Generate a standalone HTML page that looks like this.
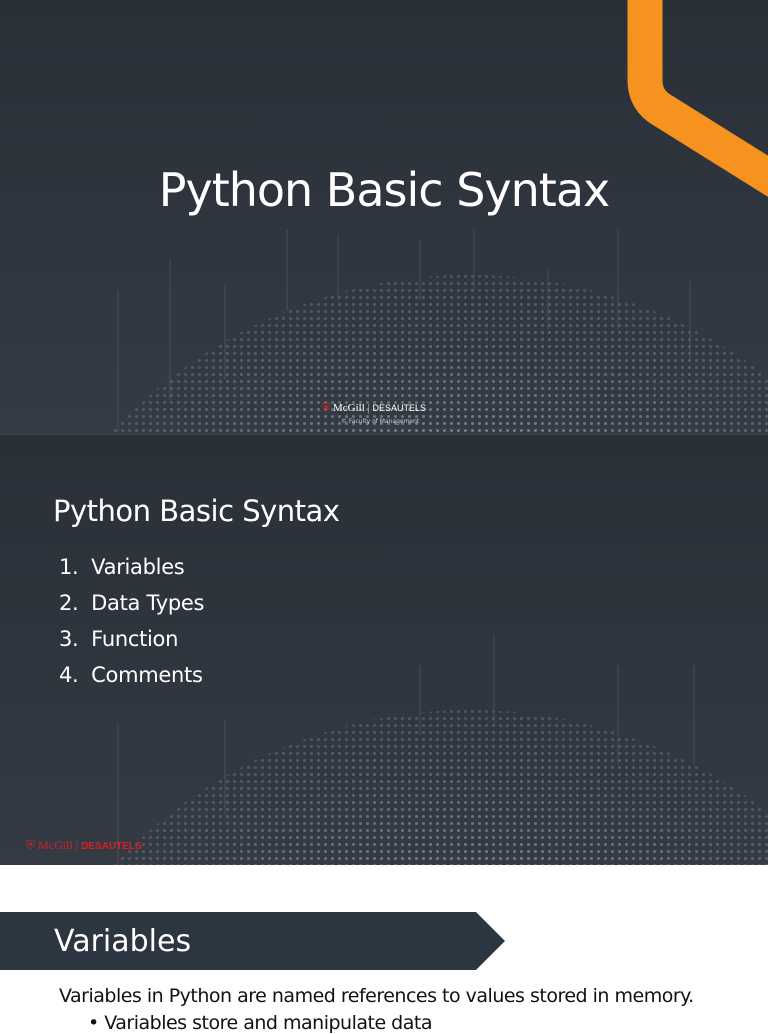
<!DOCTYPE html>
<html><head><meta charset="utf-8"><style>
*{margin:0;padding:0}
body{width:768px;height:1024px;background:#fff;position:relative;overflow:hidden;font-family:"Liberation Sans",sans-serif}
.slide{position:absolute;left:0;width:768px;background:#2c333c;overflow:hidden}
.t{position:absolute;color:#fff;font-family:"DejaVu Sans","Liberation Sans",sans-serif}
</style></head><body>
<div style="position:absolute;left:0;top:430px;width:768px;height:6px;background:#3a4049"></div>
<div class="slide" style="top:0;height:432px;background:linear-gradient(180deg,#2a3038 0%,#2f363f 60%,#343b44 100%)">
<svg width="768" height="432" style="position:absolute;left:0;top:0">
<defs>
<pattern id="d" width="7" height="7" patternUnits="userSpaceOnUse"><circle cx="3.5" cy="3.5" r="1.5" fill="#9aa0a8"/></pattern>
<radialGradient id="g" cx="0.5" cy="0.5" r="0.5"><stop offset="0.6" stop-color="#fff" stop-opacity="0.75"/><stop offset="1" stop-color="#fff" stop-opacity="0.3"/></radialGradient>
<mask id="m"><ellipse cx="470" cy="770" rx="490" ry="495" fill="url(#g)"/></mask>
</defs>
<rect width="768" height="432" fill="url(#d)" mask="url(#m)"/>
<g stroke="#5a626b" stroke-width="1" opacity="0.6">
<line x1="118" y1="290" x2="118" y2="432"/><line x1="170" y1="260" x2="170" y2="400"/><line x1="225" y1="285" x2="225" y2="380"/><line x1="287" y1="230" x2="287" y2="310"/><line x1="338" y1="235" x2="338" y2="300"/><line x1="420" y1="240" x2="420" y2="300"/><line x1="474" y1="230" x2="474" y2="290"/><line x1="548" y1="270" x2="548" y2="330"/><line x1="618" y1="230" x2="618" y2="330"/><line x1="690" y1="280" x2="690" y2="360"/>
</g>
<path d="M645 0 L645 80 Q645 100 662 110 L790 190" fill="none" stroke="#f6921e" stroke-width="35"/>
</svg>
<div class="t" style="left:0;width:768px;top:163px;text-align:center;font-size:46px;letter-spacing:-1px">Python Basic Syntax</div>
<div class="t" style="left:322px;top:402px;font-size:11px;font-family:'Liberation Serif',serif"><span style="color:#d22">&#9960;</span> McGill <span style="opacity:.6">|</span> <span style="font-family:'Liberation Sans';font-size:9px">DESAUTELS</span></div>
<div class="t" style="left:341px;top:418px;font-size:6px;color:#ccc">© Faculty of Management</div>
</div>
<div class="slide" style="top:435px;height:430px;background:linear-gradient(180deg,#2a3038 0%,#2f363f 60%,#343b44 100%)">
<svg width="768" height="430" style="position:absolute;left:0;top:0">
<rect width="768" height="430" fill="url(#d)" mask="url(#m)"/>
<g stroke="#5a626b" stroke-width="1" opacity="0.6">
<line x1="118" y1="290" x2="118" y2="431"/><line x1="225" y1="285" x2="225" y2="380"/><line x1="420" y1="230" x2="420" y2="300"/><line x1="494" y1="200" x2="494" y2="290"/><line x1="618" y1="230" x2="618" y2="330"/><line x1="694" y1="230" x2="694" y2="330"/>
</g>
</svg>
<div class="t" style="left:53px;top:59px;font-size:29px;letter-spacing:-0.5px">Python Basic Syntax</div>
<div class="t" style="left:59px;top:114px;font-size:21px;line-height:36px;letter-spacing:-0.3px">1.&nbsp; Variables<br>2.&nbsp; Data Types<br>3.&nbsp; Function<br>4.&nbsp; Comments</div>
<div class="t" style="left:26px;top:403px;font-size:12px;font-family:'Liberation Serif',serif;color:#d8202a">&#9960; McGill | <span style="font-family:'Liberation Sans';font-size:10px;font-weight:bold">DESAUTELS</span></div>
</div>
<svg width="768" height="70" style="position:absolute;left:0;top:910px"><polygon points="0,2 476,2 505,31 476,60 0,60" fill="#2c3640"/></svg>
<div class="t" style="left:54px;top:924px;font-size:30px">Variables</div>
<div style="position:absolute;left:59px;top:985px;font-size:19px;color:#111;font-family:'DejaVu Sans',sans-serif;letter-spacing:-0.5px">Variables in Python are named references to values stored in memory.</div>
<div style="position:absolute;left:88px;top:1012px;font-size:19px;color:#111;font-family:'DejaVu Sans',sans-serif;letter-spacing:-0.5px">• Variables store and manipulate data</div>
</body></html>
